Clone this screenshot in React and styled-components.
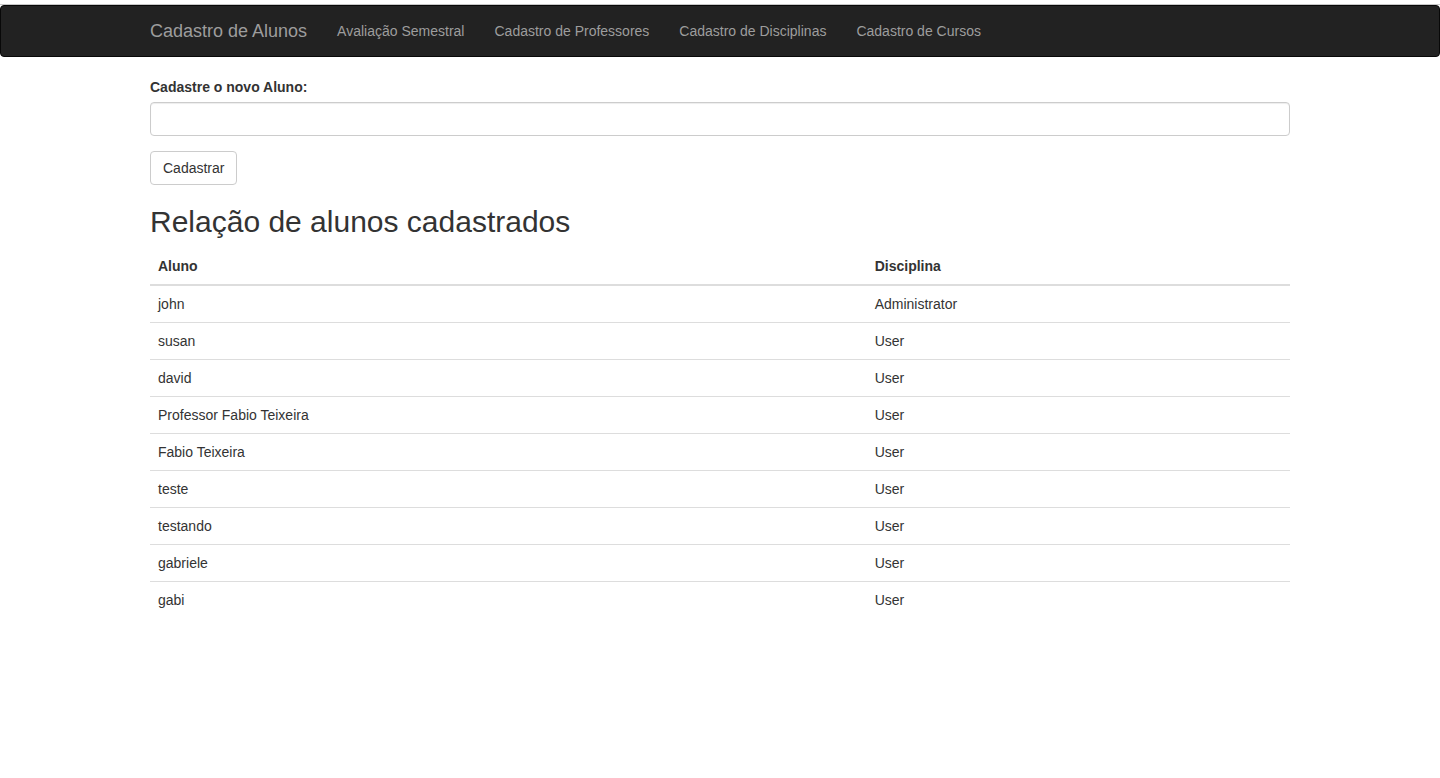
import React from "react";
import styled, { createGlobalStyle } from "styled-components";

const GlobalStyle = createGlobalStyle`
  *, *::before, *::after { box-sizing: border-box; }
  body {
    margin: 0;
    padding-top: 4px;
    background: #fff;
    color: #333;
    font-family: "Helvetica Neue", Helvetica, Arial, "Liberation Sans", sans-serif;
    font-size: 14px;
    line-height: 20px;
  }
`;

const Page = styled.div`
  border-top: 1px solid #c8c8c8;
`;

const Container = styled.div`
  max-width: 1170px;
  margin: 0 auto;
  padding: 0 15px;
`;

const Navbar = styled.nav`
  min-height: 50px;
  margin-bottom: 20px;
  background: #222;
  border: 1px solid #080808;
  border-radius: 4px;
`;

const NavRow = styled(Container)`
  display: flex;
  flex-wrap: wrap;
`;

const Brand = styled.a`
  padding: 15px 15px 15px 0;
  color: #9d9d9d;
  font-size: 18px;
  line-height: 20px;
  text-decoration: none;
  &:hover { color: #fff; }
`;

const NavList = styled.ul`
  display: flex;
  flex-wrap: wrap;
  margin: 0;
  padding: 0;
  list-style: none;
`;

const NavLink = styled.a`
  display: block;
  padding: 15px;
  color: #9d9d9d;
  text-decoration: none;
  &:hover { color: #fff; }
`;

const Field = styled.div`
  margin-bottom: 15px;
`;

const Label = styled.label`
  display: block;
  margin-bottom: 5px;
  font-weight: 700;
`;

const TextInput = styled.input`
  display: block;
  width: 100%;
  height: 34px;
  padding: 6px 12px;
  color: #555;
  font: inherit;
  background: #fff;
  border: 1px solid #ccc;
  border-radius: 4px;
  box-shadow: inset 0 1px 1px rgba(0, 0, 0, 0.075);
  &:focus { border-color: #66afe9; outline: 0; }
`;

const Button = styled.button`
  padding: 6px 12px;
  color: #333;
  font: inherit;
  background: #fff;
  border: 1px solid #ccc;
  border-radius: 4px;
  cursor: pointer;
  &:hover { background: #e6e6e6; }
`;

const Title = styled.h2`
  margin: 20px 0 10px;
  font-size: 30px;
  font-weight: 500;
  line-height: 33px;
`;

const Table = styled.table`
  width: 100%;
  margin-bottom: 20px;
  border-collapse: collapse;
`;

const HeadCell = styled.th`
  padding: 8px;
  text-align: left;
  vertical-align: bottom;
  border-bottom: 2px solid #ddd;
`;

const Cell = styled.td`
  padding: 8px;
  vertical-align: top;
  border-top: 1px solid #ddd;
`;

const links = [
  "Avaliação Semestral",
  "Cadastro de Professores",
  "Cadastro de Disciplinas",
  "Cadastro de Cursos",
];

const students = [
  ["john", "Administrator"],
  ["susan", "User"],
  ["david", "User"],
  ["Professor Fabio Teixeira", "User"],
  ["Fabio Teixeira", "User"],
  ["teste", "User"],
  ["testando", "User"],
  ["gabriele", "User"],
  ["gabi", "User"],
];

export default function App() {
  return (
    <Page>
      <GlobalStyle />
      <Navbar>
        <NavRow>
          <Brand href="#">Cadastro de Alunos</Brand>
          <NavList>
            {links.map((text) => (
              <li key={text}>
                <NavLink href="#">{text}</NavLink>
              </li>
            ))}
          </NavList>
        </NavRow>
      </Navbar>
      <Container as="main">
        <form onSubmit={(event) => event.preventDefault()}>
          <Field>
            <Label htmlFor="name">Cadastre o novo Aluno:</Label>
            <TextInput id="name" name="name" type="text" />
          </Field>
          <Button type="submit">Cadastrar</Button>
        </form>
        <Title>Relação de alunos cadastrados</Title>
        <Table>
          <thead>
            <tr>
              <HeadCell scope="col">Aluno</HeadCell>
              <HeadCell scope="col">Disciplina</HeadCell>
            </tr>
          </thead>
          <tbody>
            {students.map(([name, role]) => (
              <tr key={name}>
                <Cell>{name}</Cell>
                <Cell>{role}</Cell>
              </tr>
            ))}
          </tbody>
        </Table>
      </Container>
    </Page>
  );
}
